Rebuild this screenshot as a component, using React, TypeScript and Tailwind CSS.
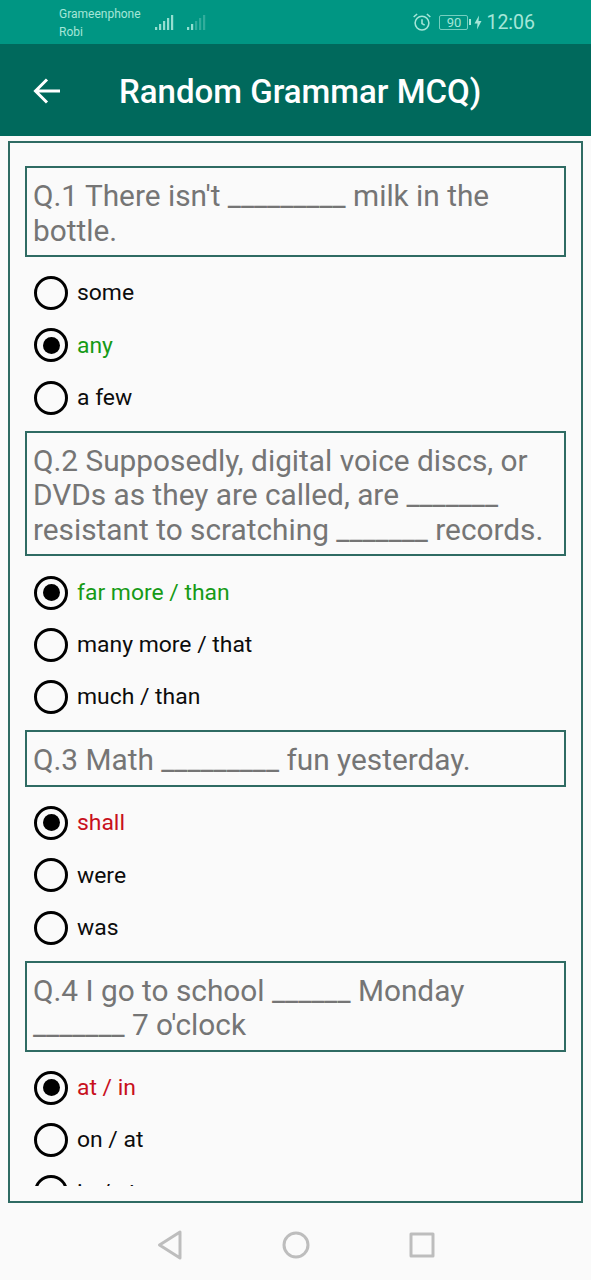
import type { ReactNode } from "react";

const font = { fontFamily: "Roboto, sans-serif" };

type Opt = { label: string; state?: "correct" | "wrong" };

function Blank({ n }: { n: number }) {
  return <span className="text-[29px]">{"_".repeat(n)}</span>;
}

const questions: { text: ReactNode; options: Opt[] }[] = [
  {
    text: <>Q.1 There isn't <Blank n={9} /> milk in the bottle.</>,
    options: [{ label: "some" }, { label: "any", state: "correct" }, { label: "a few" }],
  },
  {
    text: <>Q.2 Supposedly, digital voice discs, or DVDs as they are called, are <Blank n={7} /> resistant to scratching <Blank n={7} /> records.</>,
    options: [{ label: "far more / than", state: "correct" }, { label: "many more / that" }, { label: "much / than" }],
  },
  {
    text: <>Q.3 Math <Blank n={9} /> fun yesterday.</>,
    options: [{ label: "shall", state: "wrong" }, { label: "were" }, { label: "was" }],
  },
  {
    text: <>Q.4 I go to school <Blank n={6} /> Monday <Blank n={7} /> 7 o'clock</>,
    options: [{ label: "at / in", state: "wrong" }, { label: "on / at" }, { label: "in / at" }],
  },
];

function Signal({ dim }: { dim?: boolean }) {
  const heights = [3, 6, 9, 12, 15];
  return (
    <svg width="19" height="17" viewBox="0 0 19 17" aria-hidden="true">
      {heights.map((h, i) => (
        <rect
          key={i}
          x={i * 4}
          y={16 - h}
          width="2.2"
          height={h}
          fill="#a5e6d8"
          opacity={dim ? (i < 2 ? 0.9 : 0.3) : 0.9}
        />
      ))}
    </svg>
  );
}

function Radio({ checked }: { checked: boolean }) {
  return (
    <span className="flex h-[34px] w-[34px] shrink-0 items-center justify-center rounded-full border-[3.5px] border-black">
      {checked && <span className="h-[17px] w-[17px] rounded-full bg-black" />}
    </span>
  );
}

export default function App() {
  return (
    <div className="flex h-[1280px] w-[591px] flex-col overflow-hidden bg-[#fafafa]" style={font}>
      <div className="flex h-[44px] shrink-0 items-center bg-[#009683] pl-[59px] pr-[56px] text-[#a5e6d8]">
        <div className="flex flex-col pt-[2px] text-[12px] leading-[18px]">
          <span>Grameenphone</span>
          <span>Robi</span>
        </div>
        <div className="ml-[14px] flex items-center gap-[13px]">
          <Signal />
          <Signal dim />
        </div>
        <div className="ml-auto flex items-center">
          <svg width="20" height="20" viewBox="0 0 18 18" fill="none" stroke="#a5e6d8" strokeWidth="1.4" aria-hidden="true">
            <circle cx="9" cy="10" r="6.2" />
            <path d="M9 6.5V10.4L11.4 11.8M1.5 4.5L4.6 1.8M16.5 4.5L13.4 1.8" />
          </svg>
          <span className="ml-[7px] flex h-[15px] w-[29px] items-center justify-center rounded-[2px] border border-[#a5e6d8]/70 text-[13px] leading-none">
            90
          </span>
          <span className="ml-[1px] h-[6px] w-[2px] bg-[#a5e6d8]" />
          <svg className="ml-[3px]" width="8" height="15" viewBox="0 0 8 14" fill="#a5e6d8" aria-hidden="true">
            <path d="M5 0L0.5 8H3.5L3 14L7.5 5.5H4.5Z" />
          </svg>
          <span className="ml-[4px] pt-[2px] text-[19.5px] leading-none">12:06</span>
        </div>
      </div>

      <div className="flex h-[92px] shrink-0 items-center bg-[#00695c] pl-[33px] pt-[2px] text-white">
        <svg width="28" height="26" viewBox="0 0 28 26" fill="none" stroke="#fff" strokeWidth="3" aria-hidden="true">
          <path d="M27 13H3M14 1.5L2.5 13L14 24.5" />
        </svg>
        <h1 className="ml-[58px] text-[33px] font-medium leading-none">Random Grammar MCQ)</h1>
      </div>

      <div className="mx-[8px] mt-[5px] h-[1062px] shrink-0 border-2 border-[#2f6b63] px-[15px] pb-[15px] pt-[23px]">
        <div className="h-full overflow-hidden">
          {questions.map((q, i) => (
            <section key={i} className="mb-[7px]">
              <p className="border-2 border-[#2f6b63] pb-[7px] pl-[6px] pr-[4px] pt-[11px] text-[29.8px] leading-[34.5px] text-[#757575]">
                {q.text}
              </p>
              <div className="mt-[10px] pl-[9px]">
                {q.options.map((o) => (
                  <div key={o.label} className="flex h-[52.3px] items-center gap-[9px]">
                    <Radio checked={!!o.state} />
                    <span
                      className={`pt-[1px] text-[22.9px] ${
                        o.state === "correct"
                          ? "text-[#169a16]"
                          : o.state === "wrong"
                            ? "text-[#c8101c]"
                            : "text-[#0c0c0c]"
                      }`}
                    >
                      {o.label}
                    </span>
                  </div>
                ))}
              </div>
            </section>
          ))}
        </div>
      </div>

      <div className="flex flex-1 items-center justify-center gap-[99px] pl-[1px] pt-[7px]">
        <svg width="26" height="30" viewBox="0 0 26 30" fill="none" stroke="#bdbdbd" strokeWidth="3" strokeLinejoin="round" aria-hidden="true">
          <path d="M23 2V28L2.5 15Z" />
        </svg>
        <svg width="28" height="28" viewBox="0 0 28 28" fill="none" stroke="#bdbdbd" strokeWidth="3" aria-hidden="true">
          <circle cx="14" cy="14" r="12" />
        </svg>
        <svg width="26" height="26" viewBox="0 0 26 26" fill="none" stroke="#bdbdbd" strokeWidth="3" strokeLinejoin="round" aria-hidden="true">
          <rect x="2" y="2" width="22" height="22" />
        </svg>
      </div>
    </div>
  );
}
